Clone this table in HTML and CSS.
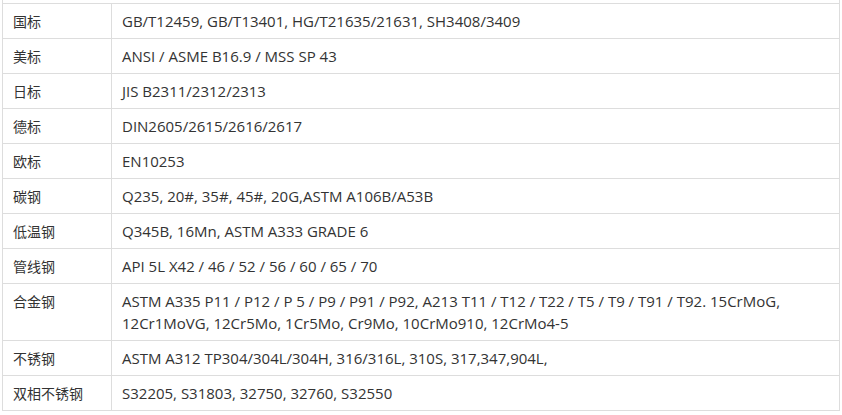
FILE: index.html
```html
<!DOCTYPE html>
<html lang="zh">
<head>
<meta charset="utf-8">
<link rel="stylesheet" href="styles.css">
</head>
<body>
<div class="wrap">
  <div class="stub"></div>
  <table class="spec">
    <colgroup><col class="c1"><col class="c2"></colgroup>
    <tbody>
      <tr><td class="label">国标</td><td class="value">GB/T12459, GB/T13401, HG/T21635/21631, SH3408/3409</td></tr>
      <tr><td class="label">美标</td><td class="value">ANSI / ASME B16.9 / MSS SP 43</td></tr>
      <tr><td class="label">日标</td><td class="value">JIS B2311/2312/2313</td></tr>
      <tr><td class="label">德标</td><td class="value">DIN2605/2615/2616/2617</td></tr>
      <tr><td class="label">欧标</td><td class="value">EN10253</td></tr>
      <tr><td class="label">碳钢</td><td class="value">Q235, 20#, 35#, 45#, 20G,ASTM A106B/A53B</td></tr>
      <tr><td class="label">低温钢</td><td class="value">Q345B, 16Mn, ASTM A333 GRADE 6</td></tr>
      <tr><td class="label">管线钢</td><td class="value">API 5L X42 / 46 / 52 / 56 / 60 / 65 / 70</td></tr>
      <tr><td class="label">合金钢</td><td class="value">ASTM A335 P11 / P12 / P 5 / P9 / P91 / P92, A213 T11 / T12 / T22 / T5 / T9 / T91 / T92. 15CrMoG, 12Cr1MoVG, 12Cr5Mo, 1Cr5Mo, Cr9Mo, 10CrMo910, 12CrMo4-5</td></tr>
      <tr><td class="label">不锈钢</td><td class="value">ASTM A312 TP304/304L/304H, 316/316L, 310S, 317,347,904L,</td></tr>
      <tr><td class="label">双相不锈钢</td><td class="value">S32205, S31803, 32750, 32760, S32550</td></tr>
    </tbody>
  </table>
</div>
</body>
</html>
```
FILE: styles.css
```css
html, body {
  margin: 0;
  padding: 0;
  background: #fff;
}
.wrap {
  padding-left: 2px;
}
.stub {
  width: 836px;
  height: 3px;
  border-left: 1px solid #dddddd;
  border-right: 1px solid #dddddd;
}
.spec {
  width: 838px;
  border-collapse: collapse;
  table-layout: fixed;
  font-family: "Open Sans", "Noto Sans CJK SC", sans-serif;
  line-height: 22px;
  color: #333333;
}
.c1 { width: 109px; }
.spec td {
  border: 1px solid #dddddd;
  padding: 6px 10px;
  vertical-align: top;
  text-align: left;
}
.spec .label {
  font-family: "Noto Sans CJK SC", sans-serif;
  font-size: 14px;
}
.spec .value {
  font-size: 15px;
}
```
